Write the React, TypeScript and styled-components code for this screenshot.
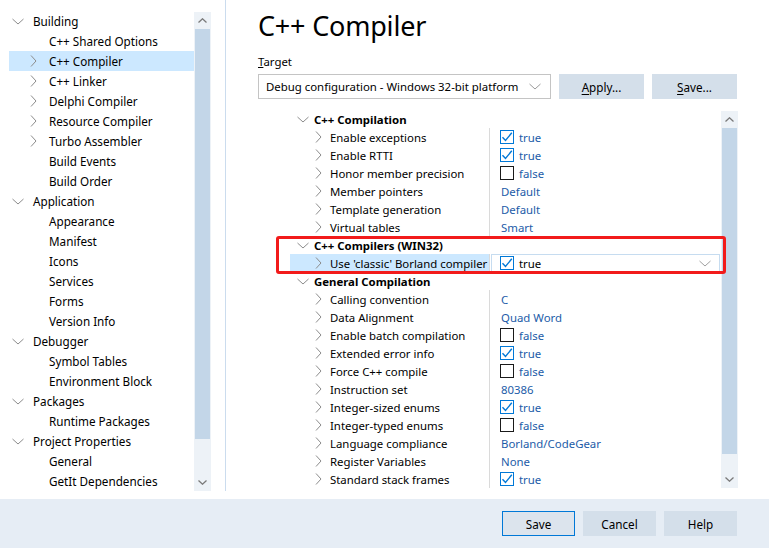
import React from 'react';
import styled, { createGlobalStyle } from 'styled-components';

const FONT = '"Noto Sans", "Open Sans", "DejaVu Sans", sans-serif';

const GlobalStyle = createGlobalStyle`
  html, body {
    margin: 0;
    padding: 0;
    background: #ffffff;
  }
  body {
    font-family: ${FONT};
    font-size: 11.4px;
    color: #000;
  }
  svg {
    flex-shrink: 0;
  }
`;

type TreeItem = { label: string; level: 0 | 1; expandable?: boolean; selected?: boolean };

const tree: TreeItem[] = [
  { label: 'Building', level: 0, expandable: true },
  { label: 'C++ Shared Options', level: 1 },
  { label: 'C++ Compiler', level: 1, expandable: true, selected: true },
  { label: 'C++ Linker', level: 1, expandable: true },
  { label: 'Delphi Compiler', level: 1, expandable: true },
  { label: 'Resource Compiler', level: 1, expandable: true },
  { label: 'Turbo Assembler', level: 1, expandable: true },
  { label: 'Build Events', level: 1 },
  { label: 'Build Order', level: 1 },
  { label: 'Application', level: 0, expandable: true },
  { label: 'Appearance', level: 1 },
  { label: 'Manifest', level: 1 },
  { label: 'Icons', level: 1 },
  { label: 'Services', level: 1 },
  { label: 'Forms', level: 1 },
  { label: 'Version Info', level: 1 },
  { label: 'Debugger', level: 0, expandable: true },
  { label: 'Symbol Tables', level: 1 },
  { label: 'Environment Block', level: 1 },
  { label: 'Packages', level: 0, expandable: true },
  { label: 'Runtime Packages', level: 1 },
  { label: 'Project Properties', level: 0, expandable: true },
  { label: 'General', level: 1 },
  { label: 'GetIt Dependencies', level: 1 },
];

type Value = { kind: 'check'; on: boolean } | { kind: 'text'; text: string };
type GridRow =
  | { type: 'category'; label: string }
  | { type: 'prop'; label: string; value: Value; selected?: boolean };

const yes: Value = { kind: 'check', on: true };
const no: Value = { kind: 'check', on: false };
const txt = (text: string): Value => ({ kind: 'text', text });

const grid: GridRow[] = [
  { type: 'category', label: 'C++ Compilation' },
  { type: 'prop', label: 'Enable exceptions', value: yes },
  { type: 'prop', label: 'Enable RTTI', value: yes },
  { type: 'prop', label: 'Honor member precision', value: no },
  { type: 'prop', label: 'Member pointers', value: txt('Default') },
  { type: 'prop', label: 'Template generation', value: txt('Default') },
  { type: 'prop', label: 'Virtual tables', value: txt('Smart') },
  { type: 'category', label: 'C++ Compilers (WIN32)' },
  { type: 'prop', label: "Use 'classic' Borland compiler", value: yes, selected: true },
  { type: 'category', label: 'General Compilation' },
  { type: 'prop', label: 'Calling convention', value: txt('C') },
  { type: 'prop', label: 'Data Alignment', value: txt('Quad Word') },
  { type: 'prop', label: 'Enable batch compilation', value: no },
  { type: 'prop', label: 'Extended error info', value: yes },
  { type: 'prop', label: 'Force C++ compile', value: no },
  { type: 'prop', label: 'Instruction set', value: txt('80386') },
  { type: 'prop', label: 'Integer-sized enums', value: yes },
  { type: 'prop', label: 'Integer-typed enums', value: no },
  { type: 'prop', label: 'Language compliance', value: txt('Borland/CodeGear') },
  { type: 'prop', label: 'Register Variables', value: txt('None') },
  { type: 'prop', label: 'Standard stack frames', value: yes },
];

/* ---------- icons ---------- */

const ChevronRight = () => (
  <svg width="7" height="12" viewBox="0 0 7 12">
    <path d="M1 0.5 L6 6 L1 11.5" fill="none" stroke="#8c8c8c" strokeWidth="1" />
  </svg>
);

const ChevronDown = ({ color = '#8c8c8c' }: { color?: string }) => (
  <svg width="12" height="7" viewBox="0 0 12 7">
    <path d="M0.5 1 L6 6 L11.5 1" fill="none" stroke={color} strokeWidth="1" />
  </svg>
);

const SmallArrow = ({ up }: { up?: boolean }) => (
  <svg width="9" height="5" viewBox="0 0 9 5">
    <path
      d={up ? 'M0.5 4.5 L4.5 0.8 L8.5 4.5' : 'M0.5 0.5 L4.5 4.2 L8.5 0.5'}
      fill="none"
      stroke="#7a7a7a"
      strokeWidth="1.3"
    />
  </svg>
);

const CheckMark = () => (
  <svg width="12" height="12" viewBox="0 0 12 12">
    <path d="M1.5 6.2 L4.5 9.5 L10.8 1.8" fill="none" stroke="#0078d7" strokeWidth="1.4" />
  </svg>
);

/* ---------- layout ---------- */

const Window = styled.div`
  width: 769px;
  height: 548px;
  display: flex;
  flex-direction: column;
  background: #fff;
  overflow: hidden;
`;

const Main = styled.div`
  display: flex;
  height: 491px;
`;

const Gap = styled.div`
  height: 8px;
`;

const LeftPane = styled.div`
  width: 226px;
  display: flex;
  padding-top: 11px;
  box-sizing: border-box;
  border-right: 1px solid #cbdcee;
  font-size: 11.7px;
`;

const TreeList = styled.div`
  width: 185px;
  margin-left: 9px;
  display: flex;
  flex-direction: column;
`;

const TreeRow = styled.div<{ $level: number; $selected?: boolean }>`
  height: 20px;
  display: flex;
  align-items: center;
  background: ${(p) => (p.$selected ? '#cce8ff' : 'transparent')};
  padding-left: ${(p) => (p.$level === 0 ? 3 : 21)}px;
  white-space: nowrap;
`;

const TreeIcon = styled.span<{ $level: number }>`
  width: ${(p) => (p.$level === 0 ? 21 : 19)}px;
  display: flex;
  align-items: center;
  flex-shrink: 0;
`;

const ScrollTrack = styled.div<{ $top: number }>`
  width: 17px;
  margin-top: ${(p) => p.$top}px;
  background: #edf2f7;
  display: flex;
  flex-direction: column;
`;

const ScrollBtn = styled.div`
  height: 17px;
  display: flex;
  align-items: center;
  justify-content: center;
  flex-shrink: 0;
`;

const ScrollThumb = styled.div<{ $h: number }>`
  height: ${(p) => p.$h}px;
  margin: 0 1px;
  background: #c3d6e8;
`;

const ScrollRest = styled.div`
  flex: 1;
`;

const Scrollbar = ({ thumb, top = 0 }: { thumb: number; top?: number }) => (
  <ScrollTrack $top={top}>
    <ScrollBtn>
      <SmallArrow up />
    </ScrollBtn>
    <ScrollThumb $h={thumb} />
    <ScrollRest />
    <ScrollBtn>
      <SmallArrow />
    </ScrollBtn>
  </ScrollTrack>
);

const RightPane = styled.div`
  flex: 1;
  padding: 8px 31px 0 32px;
  display: flex;
  flex-direction: column;
`;

const Title = styled.h1`
  margin: 0;
  height: 36px;
  line-height: 36px;
  font-size: 27px;
  font-weight: 400;
  letter-spacing: -0.2px;
  color: #000;
`;

const FieldLabel = styled.div`
  margin-top: 10px;
  height: 16px;
  line-height: 16px;
`;

const TargetRow = styled.div`
  margin-top: 4px;
  display: flex;
  gap: 8px;
  height: 25px;
`;

const Combo = styled.div`
  width: 293px;
  box-sizing: border-box;
  border: 1px solid #c4c4c4;
  display: flex;
  align-items: center;
  justify-content: space-between;
  padding: 0 9px 0 7px;
  white-space: nowrap;
`;

const Button = styled.button<{ $w?: number; $default?: boolean }>`
  width: ${(p) => p.$w ?? 85}px;
  height: 25px;
  font-family: ${FONT};
  font-size: 11.7px;
  color: #000;
  padding: 0;
  background: ${(p) => (p.$default ? '#dce4ed' : '#d4dfea')};
  border: 1px solid ${(p) => (p.$default ? '#0078d7' : '#d4dfea')};
  u {
    text-decoration: underline;
    text-underline-offset: 2px;
  }
`;

const GridWrap = styled.div`
  position: relative;
  margin-top: 11px;
  margin-left: 32px;
  height: 378px;
  display: flex;
`;

const GridRows = styled.div`
  flex: 1;
  display: flex;
  flex-direction: column;
`;

const Row = styled.div`
  height: 18px;
  display: flex;
  white-space: nowrap;
`;

const CategoryCell = styled.div`
  display: flex;
  align-items: center;
  padding-left: 7px;
  font-weight: 700;
  gap: 5px;
`;

const NameCell = styled.div<{ $selected?: boolean }>`
  width: 200px;
  flex-shrink: 0;
  display: flex;
  align-items: center;
  padding-left: 25px;
  box-sizing: border-box;
  gap: 8px;
  background: ${(p) => (p.$selected ? '#cce8ff' : 'transparent')};
  border-right: 1px solid #dadada;
  overflow: hidden;
`;

const ValueCell = styled.div<{ $editing?: boolean }>`
  flex: 1;
  display: flex;
  align-items: center;
  padding-left: ${(p) => (p.$editing ? 9 : 11)}px;
  padding-right: 8px;
  gap: 5px;
  color: ${(p) => (p.$editing ? '#000' : '#1c5ca8')};
  border: ${(p) => (p.$editing ? '1px solid #c6dcf0' : 'none')};
  margin: ${(p) => (p.$editing ? '0 1px 0 1px' : '0')};
`;

const ValueText = styled.span`
  flex: 1;
`;

const Box = styled.span<{ $on: boolean }>`
  width: 14px;
  height: 14px;
  box-sizing: border-box;
  border: 1px solid ${(p) => (p.$on ? '#0078d7' : '#1a1a1a')};
  display: flex;
  align-items: center;
  justify-content: center;
  margin-left: -1px;
`;

const Highlight = styled.div`
  position: absolute;
  left: -14px;
  top: 126px;
  width: 450px;
  height: 38px;
  box-sizing: border-box;
  border: 3px solid #f21b1b;
  border-radius: 3px;
  pointer-events: none;
`;

const Footer = styled.div`
  height: 49px;
  background: #e6edf5;
  display: flex;
  justify-content: flex-end;
  align-items: flex-start;
  padding: 12px 32px 0 0;
  box-sizing: border-box;
  gap: 8px;
`;

function ValueView({ value, editing }: { value: Value; editing?: boolean }) {
  return (
    <ValueCell $editing={editing}>
      {value.kind === 'check' && (
        <Box $on={value.on}>{value.on && <CheckMark />}</Box>
      )}
      <ValueText>
        {value.kind === 'check' ? (value.on ? 'true' : 'false') : value.text}
      </ValueText>
      {editing && <ChevronDown color="#a0a0a0" />}
    </ValueCell>
  );
}

export default function App() {
  return (
    <>
      <GlobalStyle />
      <Window>
        <Main>
          <LeftPane>
            <TreeList>
              {tree.map((item) => (
                <TreeRow key={item.label} $level={item.level} $selected={item.selected}>
                  <TreeIcon $level={item.level}>
                    {item.expandable && (item.level === 0 ? <ChevronDown /> : <ChevronRight />)}
                  </TreeIcon>
                  {item.label}
                </TreeRow>
              ))}
            </TreeList>
            <Scrollbar thumb={410} top={1} />
          </LeftPane>
          <RightPane>
            <Title>C++ Compiler</Title>
            <FieldLabel>
              <u>T</u>arget
            </FieldLabel>
            <TargetRow>
              <Combo>
                Debug configuration - Windows 32-bit platform
                <ChevronDown color="#9a9a9a" />
              </Combo>
              <Button>
                <u>A</u>pply...
              </Button>
              <Button>
                <u>S</u>ave...
              </Button>
            </TargetRow>
            <GridWrap>
              <GridRows>
                {grid.map((row) =>
                  row.type === 'category' ? (
                    <Row key={row.label}>
                      <CategoryCell>
                        <ChevronDown />
                        {row.label}
                      </CategoryCell>
                    </Row>
                  ) : (
                    <Row key={row.label}>
                      <NameCell $selected={row.selected}>
                        <ChevronRight />
                        {row.label}
                      </NameCell>
                      <ValueView value={row.value} editing={row.selected} />
                    </Row>
                  ),
                )}
              </GridRows>
              <Scrollbar thumb={326} top={1} />
              <Highlight />
            </GridWrap>
          </RightPane>
        </Main>
        <Gap />
        <Footer>
          <Button $w={73} $default>
            Save
          </Button>
          <Button $w={73}>Cancel</Button>
          <Button $w={73}>Help</Button>
        </Footer>
      </Window>
    </>
  );
}
